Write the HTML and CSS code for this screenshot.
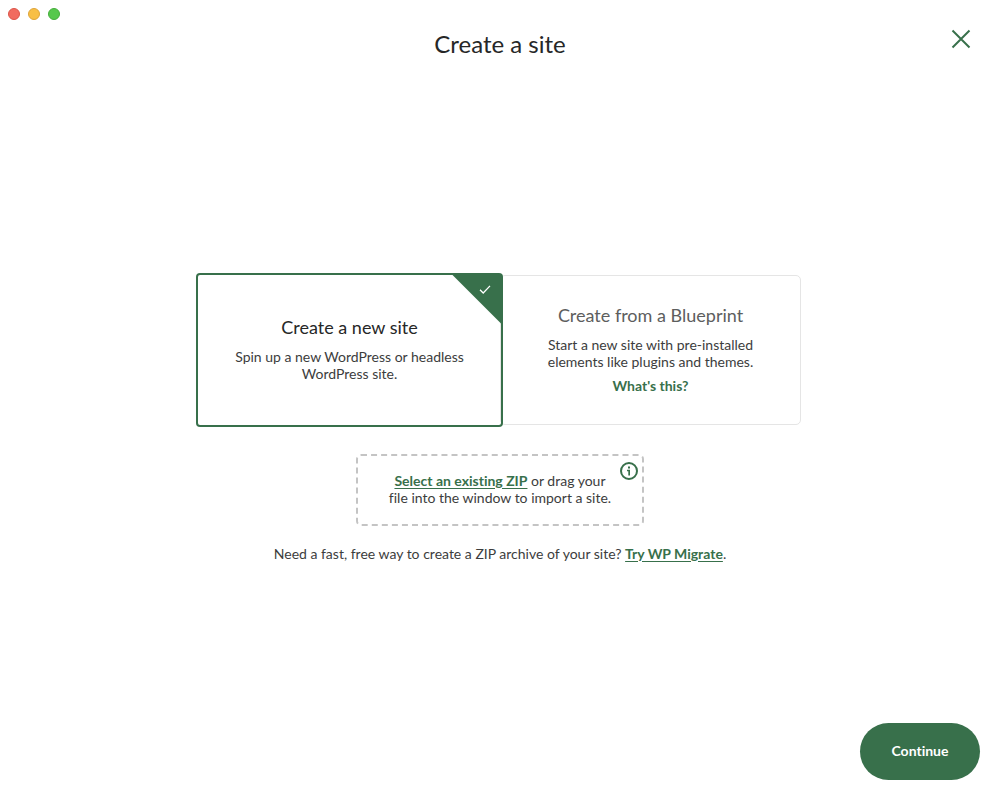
FILE: index.html
```html
<!DOCTYPE html>
<html lang="en">
<head>
<meta charset="utf-8">
<meta name="viewport" content="width=device-width, initial-scale=1">
<title>Create a site</title>
<link rel="stylesheet" href="styles.css">
</head>
<body>
<form class="window">
  <div class="traffic-lights">
    <button type="button" class="light light-close" aria-label="Close window"></button>
    <button type="button" class="light light-minimize" aria-label="Minimize window"></button>
    <button type="button" class="light light-zoom" aria-label="Zoom window"></button>
  </div>
  <header class="header">
    <h1 class="title">Create a site</h1>
    <button type="button" class="close" aria-label="Close">
      <svg width="20" height="20" viewBox="0 0 20 20" fill="none" stroke="currentColor" stroke-width="2"><path d="M1.5 1.5l17 17M18.500 1.5l-17 17"/></svg>
    </button>
  </header>
  <main class="main">
    <div class="options">
      <label class="card">
        <input class="card-radio" type="radio" name="kind" checked>
        <span class="corner">
          <svg class="tick" width="12" height="10" viewBox="0 0 12 10" fill="none" stroke="currentColor" stroke-width="1.3"><path d="M1 4.8l3.2 3.200L11 0.9"/></svg>
        </span>
        <span class="card-title">Create a new site</span>
        <span class="card-text">Spin up a new WordPress or headless<br>WordPress site.</span>
      </label>
      <label class="card">
        <input class="card-radio" type="radio" name="kind">
        <span class="corner">
          <svg class="tick" width="12" height="10" viewBox="0 0 12 10" fill="none" stroke="currentColor" stroke-width="1.3"><path d="M1 4.8l3.2 3.200L11 0.9"/></svg>
        </span>
        <span class="card-title">Create from a Blueprint</span>
        <span class="card-text">Start a new site with pre-installed<br>elements like plugins and themes.</span>
        <a class="card-link" href="#">What's this?</a>
      </label>
    </div>
    <div class="dropzone">
      <p class="text"><a class="link" href="#">Select an existing ZIP</a> or drag your<br>file into the window to import a site.</p>
      <button type="button" class="info" aria-label="More information">
        <svg width="18" height="18" viewBox="0 0 18 18"><circle cx="9" cy="9" r="8" fill="none" stroke="currentColor" stroke-width="2"/><path d="M8 4.500h2v2H8zM7 7.800h3v5.700H8.300V9.200H7z" fill="currentColor"/></svg>
      </button>
    </div>
    <p class="text">Need a fast, free way to create a ZIP archive of your site? <a class="link" href="#">Try WP Migrate</a>.</p>
  </main>
  <footer class="footer">
    <button type="submit" class="continue">Continue</button>
  </footer>
</form>
</body>
</html>
```
FILE: styles.css
```css
* {
  box-sizing: border-box;
}

body {
  margin: 0;
  background: #fff;
  color: #262727;
  font-family: "Lato", "Open Sans", sans-serif;
  font-size: 14px;
  font-variant-ligatures: none;
  line-height: 17px;
}

button {
  border: 0;
  padding: 0;
  background: none;
  font: inherit;
  font-variant-ligatures: none;
  cursor: pointer;
}

svg {
  display: block;
}

.window {
  position: relative;
  display: flex;
  flex-direction: column;
  min-height: 100vh;
}

.traffic-lights {
  position: absolute;
  top: 8px;
  left: 8px;
  display: flex;
  gap: 8px;
}

.light {
  width: 12px;
  height: 12px;
  border: 1px solid;
  border-radius: 50%;
}

.light-close {
  background: #f16b5f;
  border-color: #dc5549;
}

.light-minimize {
  background: #f8bf45;
  border-color: #dfa53a;
}

.light-zoom {
  background: #56c84c;
  border-color: #45ae3b;
}

.header {
  display: grid;
  grid-template-columns: 1fr auto 1fr;
  padding: 28px 29px 0;
}

.title {
  grid-column: 2;
  margin: 0;
  font-size: 24px;
  line-height: 32px;
  font-weight: 400;
}

.close {
  justify-self: end;
  align-self: start;
  margin-top: 1px;
  color: #38704b;
}

.main {
  flex: 1;
  display: flex;
  flex-direction: column;
  align-items: center;
  justify-content: center;
  gap: 19px;
  padding: 73px 20px 0;
}

.options {
  display: grid;
  grid-template-columns: 1fr 1fr;
  width: 100%;
  max-width: 602px;
  margin-bottom: 10px;
}

.card {
  position: relative;
  display: flex;
  flex-direction: column;
  align-items: center;
  justify-content: center;
  min-height: 150px;
  padding: 0 20px 2px;
  border: 1px solid #e5e5e5;
  border-radius: 5px;
  text-align: center;
  cursor: pointer;
}

.card:has(:checked) {
  z-index: 1;
  margin: 0 -1px;
  border: 0;
  border-radius: 2px;
  box-shadow: 0 0 0 2px #38704b;
}

.card-radio {
  position: absolute;
  opacity: 0;
}

.corner {
  display: none;
  position: absolute;
  top: 0;
  right: 0;
  width: 49px;
  height: 49px;
  background: #38704b;
  clip-path: polygon(0 0, 100% 0, 100% 100%);
  color: #fff;
}

.card:has(:checked) .corner {
  display: block;
}

.tick {
  margin: 10px 0 0 27px;
}

.card-title {
  margin-bottom: 9px;
  color: #5d5e5e;
  font-size: 18px;
  line-height: 24px;
}

.card:has(:checked) .card-title {
  color: #262727;
}

.card-text,
.text {
  color: #3c3d3d;
}

.card-link {
  margin-top: 7px;
  color: #38704b;
  font-weight: 700;
  text-decoration: none;
}

.dropzone {
  position: relative;
  width: 100%;
  max-width: 288px;
  padding: 16px 20px 18px;
  border: 2px dashed #c4c4c4;
  border-radius: 5px;
}

.text {
  margin: 0;
  text-align: center;
}

.link {
  color: #38704b;
  font-weight: 700;
  text-underline-offset: 2px;
}

.info {
  position: absolute;
  top: 6px;
  right: 4px;
  color: #38704b;
}

.footer {
  display: flex;
  justify-content: flex-end;
  padding: 20px;
}

.continue {
  min-width: 120px;
  padding: 19px 20px 21px;
  border-radius: 29px;
  background: #38704b;
  color: #fff;
  font-weight: 700;
}
```
